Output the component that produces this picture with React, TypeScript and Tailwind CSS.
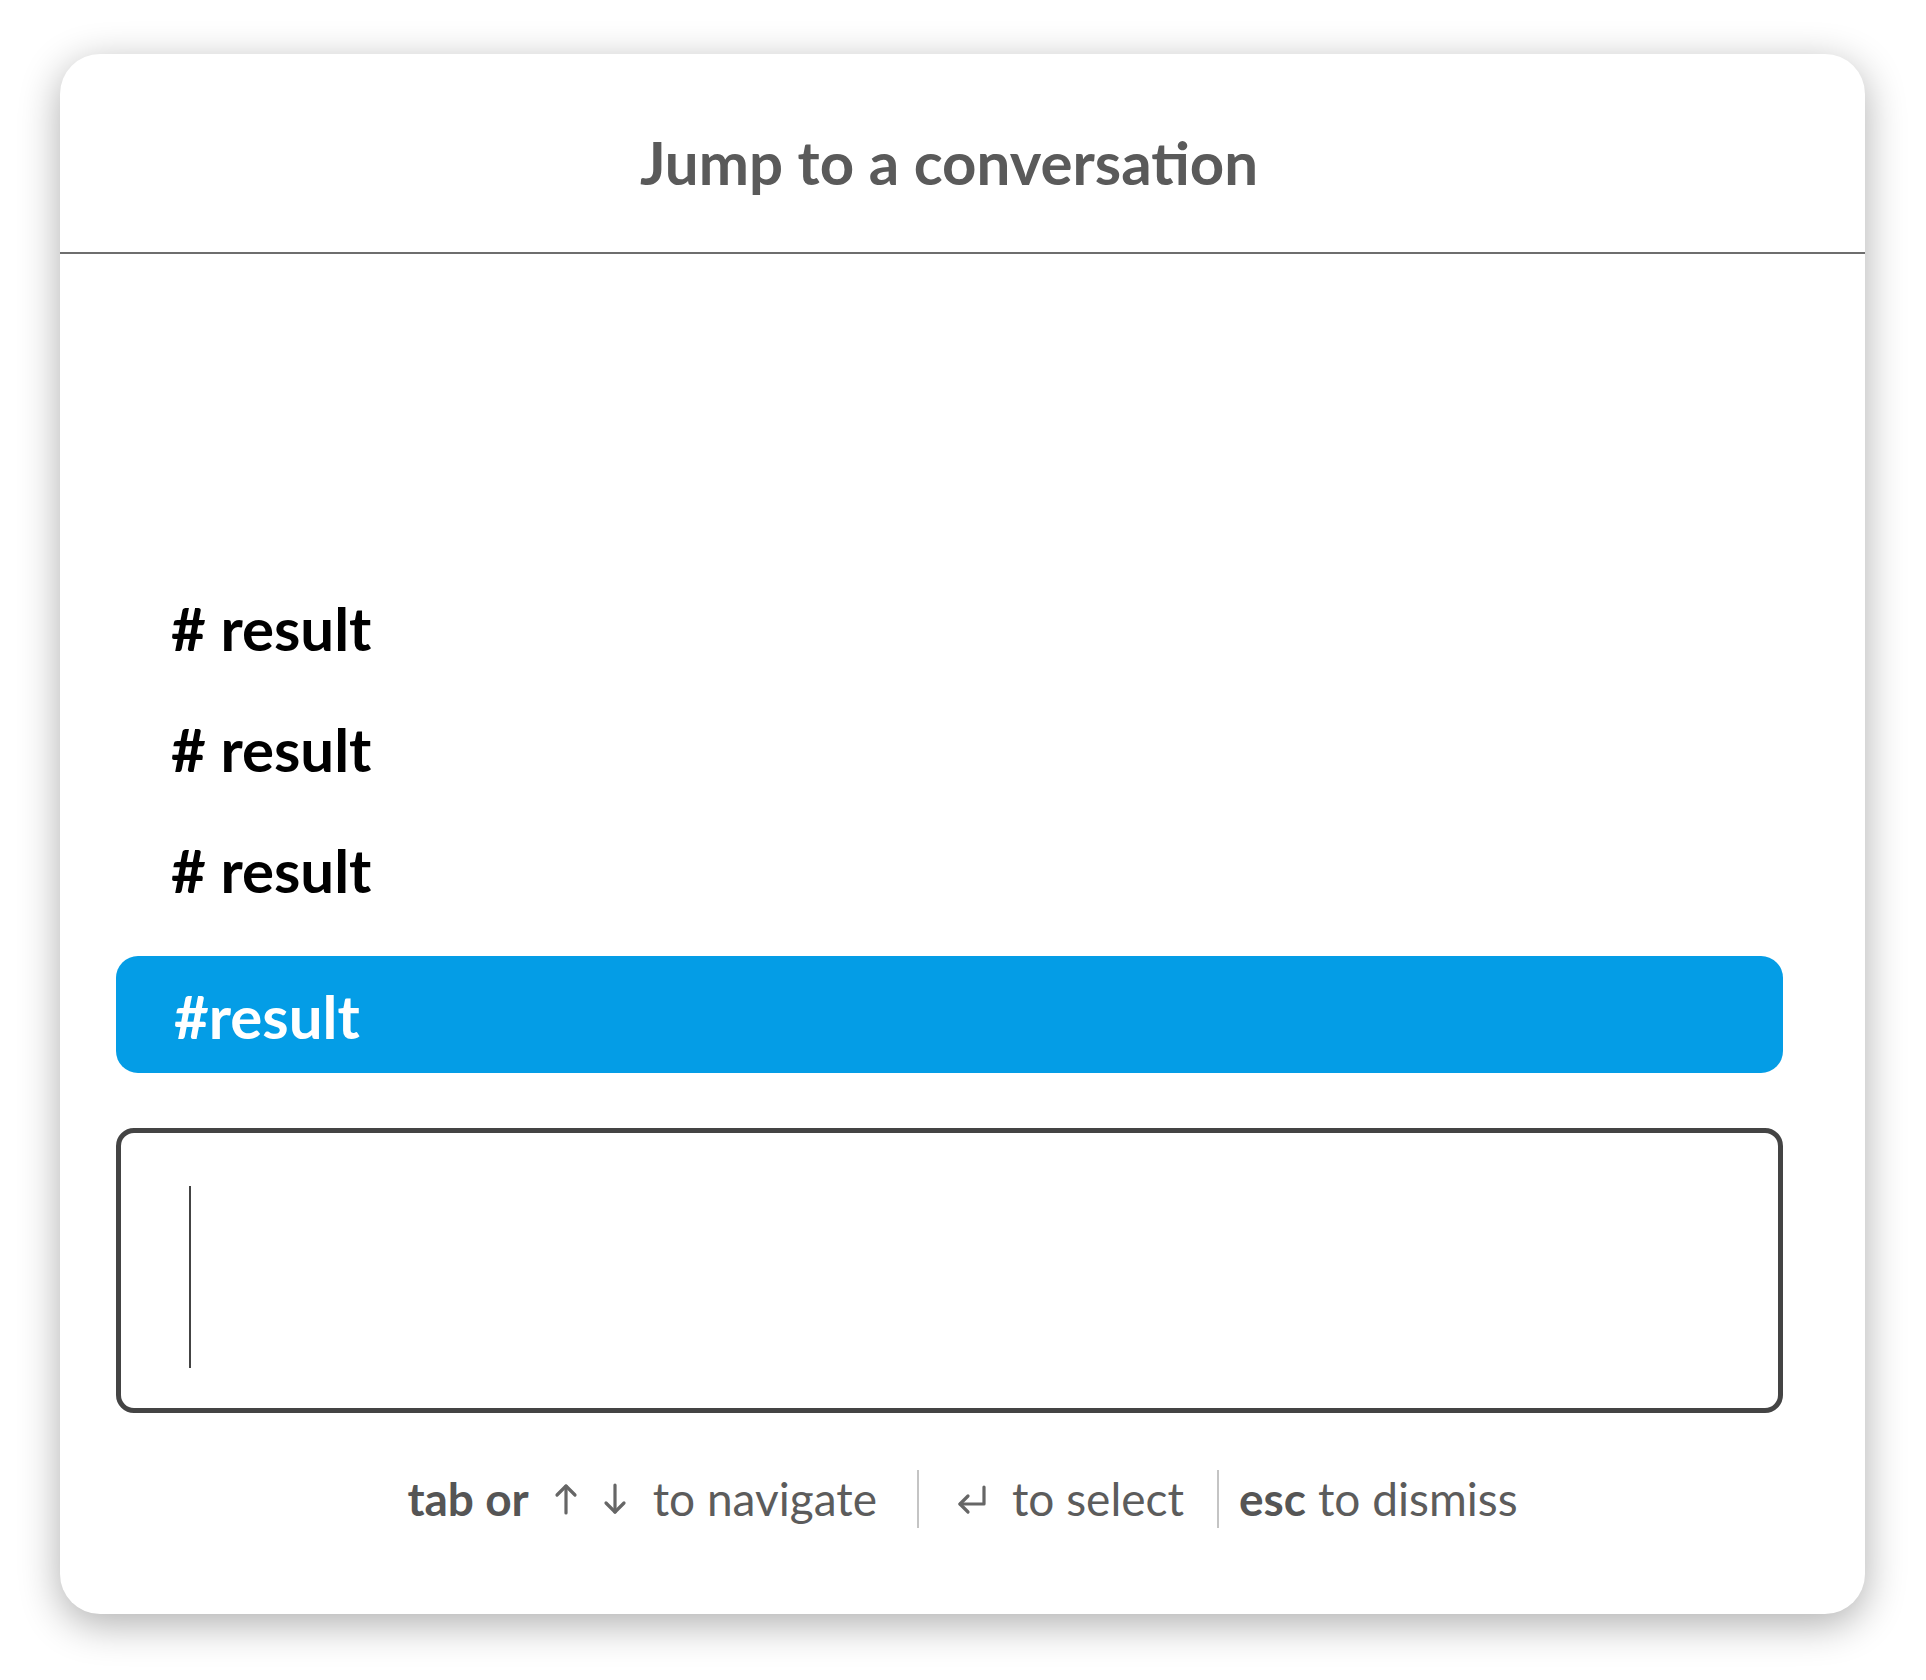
import React from "react";

const results = ["# result", "# result", "# result"];

function UpArrow() {
  return (
    <svg width="26" height="32" viewBox="0 0 26 32" fill="none" stroke="#666666" strokeWidth="3.2" strokeLinecap="round" strokeLinejoin="round">
      <path d="M13 30V3" />
      <path d="M4 12l9-9 9 9" />
    </svg>
  );
}

function DownArrow() {
  return (
    <svg width="26" height="32" viewBox="0 0 26 32" fill="none" stroke="#666666" strokeWidth="3.2" strokeLinecap="round" strokeLinejoin="round">
      <path d="M13 2v27" />
      <path d="M4 20l9 9 9-9" />
    </svg>
  );
}

function ReturnArrow() {
  return (
    <svg width="32" height="32" viewBox="0 0 32 32" fill="none" stroke="#666666" strokeWidth="3.2" strokeLinecap="round" strokeLinejoin="round">
      <path d="M28 4v17H4" />
      <path d="M12 13l-8 8 8 8" />
    </svg>
  );
}

export default function App() {
  return (
    <div className="min-h-[1680px] w-full bg-white pt-[54px] pl-[60px] font-['Lato','Noto_Sans',sans-serif]">
      <div className="flex h-[1560px] w-[1805px] flex-col rounded-[40px] bg-white shadow-[0_10px_40px_rgba(0,0,0,0.32)]">
        <header className="flex h-[200px] items-center justify-center border-b-2 border-[#6e6e6e] pr-[27px] pt-[17px]">
          <h1 className="text-[60px] font-bold text-[#5a5a5a]">Jump to a conversation</h1>
        </header>

        <div className="flex flex-col pl-[56px] pr-[82px] pt-[313px]">
          {results.map((label, i) => (
            <div key={i} className="flex h-[121px] items-center pl-[55px] text-[60px] font-bold text-black">
              {label}
            </div>
          ))}

          <div className="mt-[26px] flex h-[117px] items-center rounded-[22px] bg-[#049de6] pl-[58px] pt-[2px] text-[60px] font-bold text-white">
            #result
          </div>

          <div className="mt-[55px] flex h-[285px] rounded-[18px] border-[5px] border-[#444444] pl-[68px] pt-[53px]">
            <span className="h-[182px] w-[2px] bg-[#444444]" />
          </div>
        </div>

        <footer className="mt-[51px] flex items-center justify-center text-[46px] text-[#5c5c5c]">
          <span className="font-bold text-[#555555]">tab or</span>
          <span className="ml-[24px] flex items-center gap-[23px]">
            <UpArrow />
            <DownArrow />
          </span>
          <span className="ml-[25px]">to navigate</span>
          <span className="ml-[40px] mr-[37px] h-[58px] w-[2px] bg-[#c4c4c4]" />
          <ReturnArrow />
          <span className="ml-[24px]">to select</span>
          <span className="ml-[33px] mr-[20px] h-[58px] w-[2px] bg-[#c4c4c4]" />
          <span className="font-bold text-[#555555]">esc</span>
          <span className="ml-[12px]">to dismiss</span>
        </footer>
      </div>
    </div>
  );
}
